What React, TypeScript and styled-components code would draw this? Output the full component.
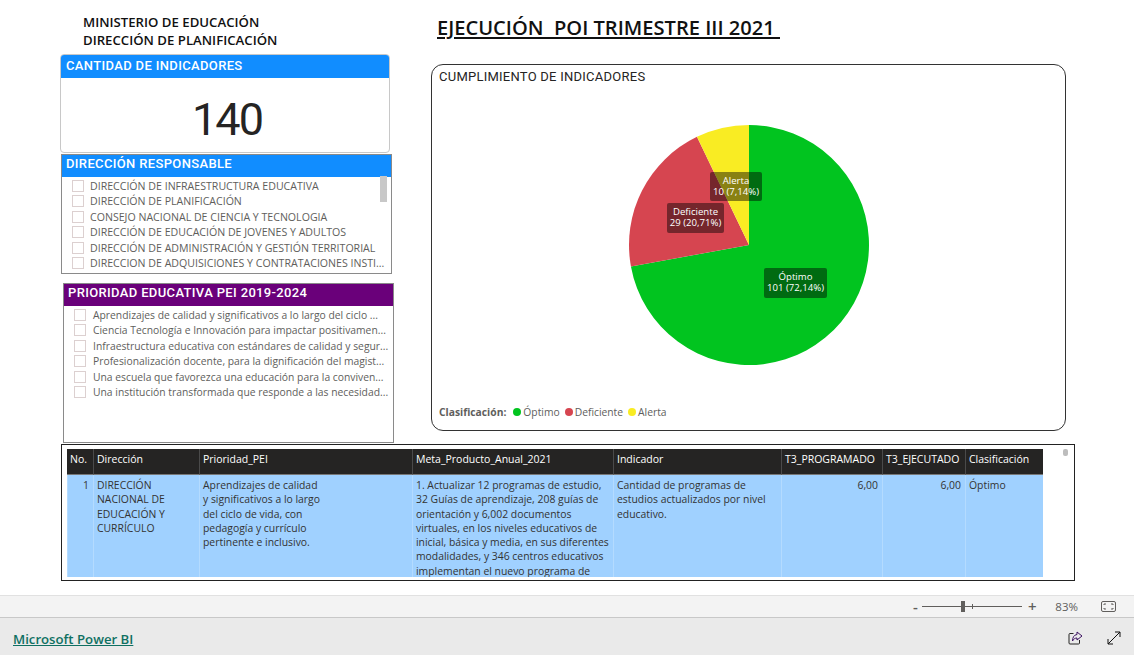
import React from 'react';
import styled, { createGlobalStyle } from 'styled-components';

const GlobalStyle = createGlobalStyle`
  html, body {
    margin: 0;
    padding: 0;
    background: #fff;
    font-family: "Open Sans", "Liberation Sans", sans-serif;
  }
`;

const DIN = '"Roboto", "Liberation Sans", sans-serif';

const Page = styled.div`
  width: 1134px;
  height: 655px;
  display: flex;
  flex-direction: column;
  overflow: hidden;
`;

const Report = styled.main`
  height: 595px;
  box-sizing: border-box;
  padding-left: 60px;
  padding-top: 13px;
  display: flex;
  flex-direction: column;
`;

const TopArea = styled.div`
  display: flex;
  height: 431px;
`;

const LeftColumn = styled.div`
  width: 333px;
  display: flex;
  flex-direction: column;
`;

const OrgTitle = styled.h2`
  margin: 0 0 5px 23px;
  height: 36px;
  font: 600 13.2px/18px "Open Sans", sans-serif;
  color: #111;
`;

const KpiCard = styled.section`
  width: 330px;
  height: 99px;
  box-sizing: border-box;
  border: 1px solid #c8c8c8;
  border-radius: 4px;
  overflow: hidden;
  display: flex;
  flex-direction: column;
`;

const PanelHeader = styled.div<{ $bg?: string; $slim?: boolean }>`
  height: ${({ $slim }) => ($slim ? 22 : 23)}px;
  flex: none;
  background: ${({ $bg }) => $bg || '#118dff'};
  color: #fff;
  font: 500 13px/${({ $slim }) => ($slim ? 18 : 21)}px ${DIN};
  letter-spacing: 0.35px;
  padding-left: ${({ $slim }) => ($slim ? 4 : 5)}px;
  white-space: nowrap;
`;

const KpiValue = styled.div`
  flex: 1;
  display: flex;
  align-items: center;
  justify-content: center;
  font: 400 45px/1 ${DIN};
  letter-spacing: -2px;
  color: #252423;
  padding: 8px 0 0 4px;
`;

const Slicer = styled.section<{ $top: number; $left: number; $height: number }>`
  width: 331px;
  height: ${({ $height }) => $height}px;
  margin-top: ${({ $top }) => $top}px;
  margin-left: ${({ $left }) => $left}px;
  box-sizing: border-box;
  border: 1px solid #8a8a8a;
  position: relative;
`;

const SlicerList = styled.ul<{ $top: number; $size: number; $gap: number }>`
  list-style: none;
  margin: 0;
  padding: ${({ $top }) => $top}px 0 0 10px;
  font-size: ${({ $size }) => $size}px;

  li {
    gap: ${({ $gap }) => $gap}px;
  }
`;

const SlicerItem = styled.li`
  display: flex;
  align-items: center;
  height: 15.5px;
  color: #605e5c;
  white-space: nowrap;
`;

const Check = styled.span`
  flex: none;
  width: 10px;
  height: 10px;
  border: 1px solid #dcd0d0;
`;

const SlicerScroll = styled.div`
  position: absolute;
  top: 21px;
  right: 4px;
  width: 7px;
  height: 26px;
  background: #c8c8c8;
`;

const RightColumn = styled.div`
  margin-left: 38px;
  width: 635px;
`;

const ReportTitle = styled.h1`
  margin: 3px 0 25px 6px;
  height: 23px;
  font: 600 20.1px/23px "Open Sans", sans-serif;
  color: #111;
  text-decoration: underline;
  white-space: pre;
`;

const ChartCard = styled.section`
  position: relative;
  box-sizing: border-box;
  width: 635px;
  height: 367px;
  border: 1px solid #333;
  border-radius: 12px;
`;

const ChartTitle = styled.div`
  margin: 4px 0 0 7px;
  font: 400 13px/16px ${DIN};
  letter-spacing: 0.25px;
  color: #252423;
`;

const PieBox = styled.svg`
  position: absolute;
  left: 195px;
  top: 58px;
`;

const Legend = styled.div`
  position: absolute;
  left: 7px;
  bottom: 11px;
  display: flex;
  align-items: center;
  font-size: 10.3px;
  color: #605e5c;
`;

const LegendLabel = styled.strong`
  font-weight: 700;
  margin-right: 7px;
`;

const LegendDot = styled.i<{ $color: string }>`
  width: 8px;
  height: 8px;
  border-radius: 50%;
  background: ${({ $color }) => $color};
  margin-right: 2px;
`;

const LegendText = styled.span`
  margin-right: 5px;
`;

const TableFrame = styled.section`
  width: 1014px;
  height: 137px;
  margin-left: 1px;
  box-sizing: border-box;
  border: 1px solid #222;
  padding: 4px 0 0 5px;
  position: relative;
  overflow: hidden;
`;

const Grid = styled.div`
  display: grid;
  width: 976px;
  grid-template-columns: 26px 106px 213px 201px 168px 101px 83px 78px;
  grid-template-rows: 26px 102px;
`;

const HeadCell = styled.div`
  background: #252423;
  color: #fff;
  font-size: 10.5px;
  line-height: 20px;
  padding-left: 3px;
  border-left: 1px solid #4a4a4a;
  border-bottom: 1px solid #777;
  box-sizing: border-box;
  white-space: nowrap;
  overflow: hidden;
  &:first-child {
    border-left: 0;
  }
`;

const BodyCell = styled.div<{ $right?: boolean }>`
  background: #a0d1ff;
  color: #333;
  font-size: 10.4px;
  line-height: 14.3px;
  padding: 3px ${({ $right }) => ($right ? 4 : 3)}px 0 3px;
  border-left: 1px solid #b4dbff;
  box-sizing: border-box;
  overflow: hidden;
  white-space: nowrap;
  text-align: ${({ $right }) => ($right ? 'right' : 'left')};
  &:first-of-type {
    border-left: 0;
  }
`;

const TableScroll = styled.div`
  position: absolute;
  top: 4px;
  right: 6px;
  width: 5px;
  height: 7px;
  border-radius: 2px;
  background: #bdbdbd;
`;

const ZoomBar = styled.div`
  height: 23px;
  box-sizing: border-box;
  background: #f3f3f3;
  border-top: 1px solid #e1e1e1;
  border-bottom: 1px solid #c8c8c8;
  display: flex;
  align-items: center;
  justify-content: flex-end;
  padding-right: 18px;
  color: #605e5c;
  font-size: 11.5px;
`;

const ZoomSign = styled.span`
  font-size: 15px;
  font-weight: 600;
  line-height: 1;
  width: 10px;
  text-align: center;
`;

const ZoomTrack = styled.div`
  position: relative;
  width: 100px;
  height: 1px;
  background: #605e5c;
  margin: 0 5px 0 2px;
`;

const ZoomThumb = styled.i`
  position: absolute;
  left: 39px;
  top: -5px;
  width: 4px;
  height: 11px;
  background: #605e5c;
`;

const ZoomTick = styled.i`
  position: absolute;
  left: 50px;
  top: -2px;
  width: 1px;
  height: 5px;
  background: #605e5c;
`;

const ZoomValue = styled.span`
  margin: 0 23px 0 18px;
`;

const Footer = styled.footer`
  height: 37px;
  box-sizing: border-box;
  background: #eaeaea;
  display: flex;
  align-items: center;
  justify-content: space-between;
  padding: 4px 13px 0;
`;

const BrandLink = styled.a`
  font-size: 13.2px;
  font-weight: 600;
  color: #0f7062;
  text-decoration: underline;
`;

const FooterIcons = styled.div`
  display: flex;
  gap: 24px;
`;

const slices = [
  { name: 'Óptimo', color: '#01c41f', from: 0, to: 259.7 },
  { name: 'Deficiente', color: '#d64550', from: 259.7, to: 334.3 },
  { name: 'Alerta', color: '#f9ec23', from: 334.3, to: 360 },
];

const PIE = { cx: 122, cy: 122, r: 120 };

const point = (deg: number) => {
  const rad = (deg * Math.PI) / 180;
  return `${PIE.cx + PIE.r * Math.sin(rad)} ${PIE.cy - PIE.r * Math.cos(rad)}`;
};

const sliceLabels = [
  { x: 83, y: 49, w: 52, h: 29, a: 'Alerta', b: '10 (7,14%)' },
  { x: 40, y: 80, w: 57, h: 30, a: 'Deficiente', b: '29 (20,71%)' },
  { x: 137, y: 145, w: 63, h: 30, a: 'Óptimo', b: '101 (72,14%)' },
];

const Pie = () => (
  <PieBox width={244} height={244} viewBox="0 0 244 244">
    {slices.map((s) => (
      <path
        key={s.name}
        fill={s.color}
        d={`M${PIE.cx} ${PIE.cy}L${point(s.from)}A${PIE.r} ${PIE.r} 0 ${s.to - s.from > 180 ? 1 : 0} 1 ${point(s.to)}Z`}
      />
    ))}
    {sliceLabels.map((l) => (
      <g key={l.a}>
        <rect x={l.x} y={l.y} width={l.w} height={l.h} rx={2} fill="#000" fillOpacity={0.45} />
        <text x={l.x + l.w / 2} y={l.y + 12} textAnchor="middle" fontSize="9.6" fill="#fff">
          {l.a}
        </text>
        <text x={l.x + l.w / 2} y={l.y + 23} textAnchor="middle" fontSize="9.6" fill="#fff">
          {l.b}
        </text>
      </g>
    ))}
  </PieBox>
);

const direcciones = [
  'DIRECCIÓN DE INFRAESTRUCTURA EDUCATIVA',
  'DIRECCIÓN DE PLANIFICACIÓN',
  'CONSEJO NACIONAL DE CIENCIA Y TECNOLOGIA',
  'DIRECCIÓN DE EDUCACIÓN DE JOVENES Y ADULTOS',
  'DIRECCIÓN DE ADMINISTRACIÓN Y GESTIÓN TERRITORIAL',
  'DIRECCION DE ADQUISICIONES Y CONTRATACIONES INSTI...',
];

const prioridades = [
  'Aprendizajes de calidad y significativos a lo largo del ciclo ...',
  'Ciencia Tecnología e Innovación para impactar positivamen...',
  'Infraestructura educativa con estándares de calidad y segur...',
  'Profesionalización docente, para la dignificación del magist...',
  'Una escuela que favorezca una educación para la conviven...',
  'Una institución transformada que responde a las necesidad...',
];

const headers = [
  'No.',
  'Dirección',
  'Prioridad_PEI',
  'Meta_Producto_Anual_2021',
  'Indicador',
  'T3_PROGRAMADO',
  'T3_EJECUTADO',
  'Clasificación',
];

const lines = (text: string[]) =>
  text.map((t, i) => (
    <React.Fragment key={t}>
      {i > 0 && <br />}
      {t}
    </React.Fragment>
  ));

const App = () => (
  <Page>
    <GlobalStyle />
    <Report>
      <TopArea>
        <LeftColumn>
          <OrgTitle>
            MINISTERIO DE EDUCACIÓN
            <br />
            DIRECCIÓN DE PLANIFICACIÓN
          </OrgTitle>
          <KpiCard>
            <PanelHeader>CANTIDAD DE INDICADORES</PanelHeader>
            <KpiValue>140</KpiValue>
          </KpiCard>
          <Slicer $top={1} $left={1} $height={120}>
            <PanelHeader $slim>DIRECCIÓN RESPONSABLE</PanelHeader>
            <SlicerList $top={1} $size={10.6} $gap={6}>
              {direcciones.map((d) => (
                <SlicerItem key={d}>
                  <Check />
                  {d}
                </SlicerItem>
              ))}
            </SlicerList>
            <SlicerScroll />
          </Slicer>
          <Slicer $top={9} $left={3} $height={160}>
            <PanelHeader $slim $bg="#6a007a">
              PRIORIDAD EDUCATIVA PEI 2019-2024
            </PanelHeader>
            <SlicerList $top={1} $size={10.34} $gap={7}>
              {prioridades.map((p) => (
                <SlicerItem key={p}>
                  <Check />
                  {p}
                </SlicerItem>
              ))}
            </SlicerList>
          </Slicer>
        </LeftColumn>
        <RightColumn>
          <ReportTitle>EJECUCIÓN  POI TRIMESTRE III 2021 </ReportTitle>
          <ChartCard>
            <ChartTitle>CUMPLIMIENTO DE INDICADORES</ChartTitle>
            <Pie />
            <Legend>
              <LegendLabel>Clasificación:</LegendLabel>
              {slices.map((s) => (
                <React.Fragment key={s.name}>
                  <LegendDot $color={s.color} />
                  <LegendText>{s.name}</LegendText>
                </React.Fragment>
              ))}
            </Legend>
          </ChartCard>
        </RightColumn>
      </TopArea>
      <TableFrame>
        <Grid>
          {headers.map((h) => (
            <HeadCell key={h}>{h}</HeadCell>
          ))}
          <BodyCell $right>1</BodyCell>
          <BodyCell>{lines(['DIRECCIÓN', 'NACIONAL DE', 'EDUCACIÓN Y', 'CURRÍCULO'])}</BodyCell>
          <BodyCell>
            {lines([
              'Aprendizajes de calidad',
              'y significativos a lo largo',
              'del ciclo de vida, con',
              'pedagogía y currículo',
              'pertinente e inclusivo.',
            ])}
          </BodyCell>
          <BodyCell>
            {lines([
              '1. Actualizar 12 programas de estudio,',
              '32 Guías de aprendizaje, 208 guías de',
              'orientación y 6,002 documentos',
              'virtuales, en los niveles educativos de',
              'inicial, básica y media, en sus diferentes',
              'modalidades, y 346 centros educativos',
              'implementan el nuevo programa de',
            ])}
          </BodyCell>
          <BodyCell>
            {lines(['Cantidad de programas de', 'estudios actualizados por nivel', 'educativo.'])}
          </BodyCell>
          <BodyCell $right>6,00</BodyCell>
          <BodyCell $right>6,00</BodyCell>
          <BodyCell>Óptimo</BodyCell>
        </Grid>
        <TableScroll />
      </TableFrame>
    </Report>
    <ZoomBar>
      <ZoomSign>-</ZoomSign>
      <ZoomTrack>
        <ZoomThumb />
        <ZoomTick />
      </ZoomTrack>
      <ZoomSign>+</ZoomSign>
      <ZoomValue>83%</ZoomValue>
      <svg width="15" height="11" viewBox="0 0 15 11" fill="none" stroke="#605e5c">
        <rect x="0.5" y="0.5" width="14" height="10" rx="1.5" />
        <path d="M3 4V3h2M10 3h2v1M3 7v1h2M10 8h2V7" />
      </svg>
    </ZoomBar>
    <Footer>
      <BrandLink>Microsoft Power BI</BrandLink>
      <FooterIcons>
        <svg width="15" height="15" viewBox="0 0 15 15" fill="none" stroke="#252423">
          <path d="M5.500 2.500H2a1 1 0 0 0-1 1V12a1 1 0 0 0 1 1h8.500a1 1 0 0 0 1-1V9" />
          <path d="M9 1l5 4-5 4V7C7 7 5.500 8 4.500 10 4.500 6.500 6 3.800 9 3.500z" stroke="#3b1060" />
        </svg>
        <svg width="14" height="14" viewBox="0 0 14 14" fill="none" stroke="#111">
          <path d="M1 13L13 1M8 1h5v5M1 8v5h5" />
        </svg>
      </FooterIcons>
    </Footer>
  </Page>
);

export default App;
